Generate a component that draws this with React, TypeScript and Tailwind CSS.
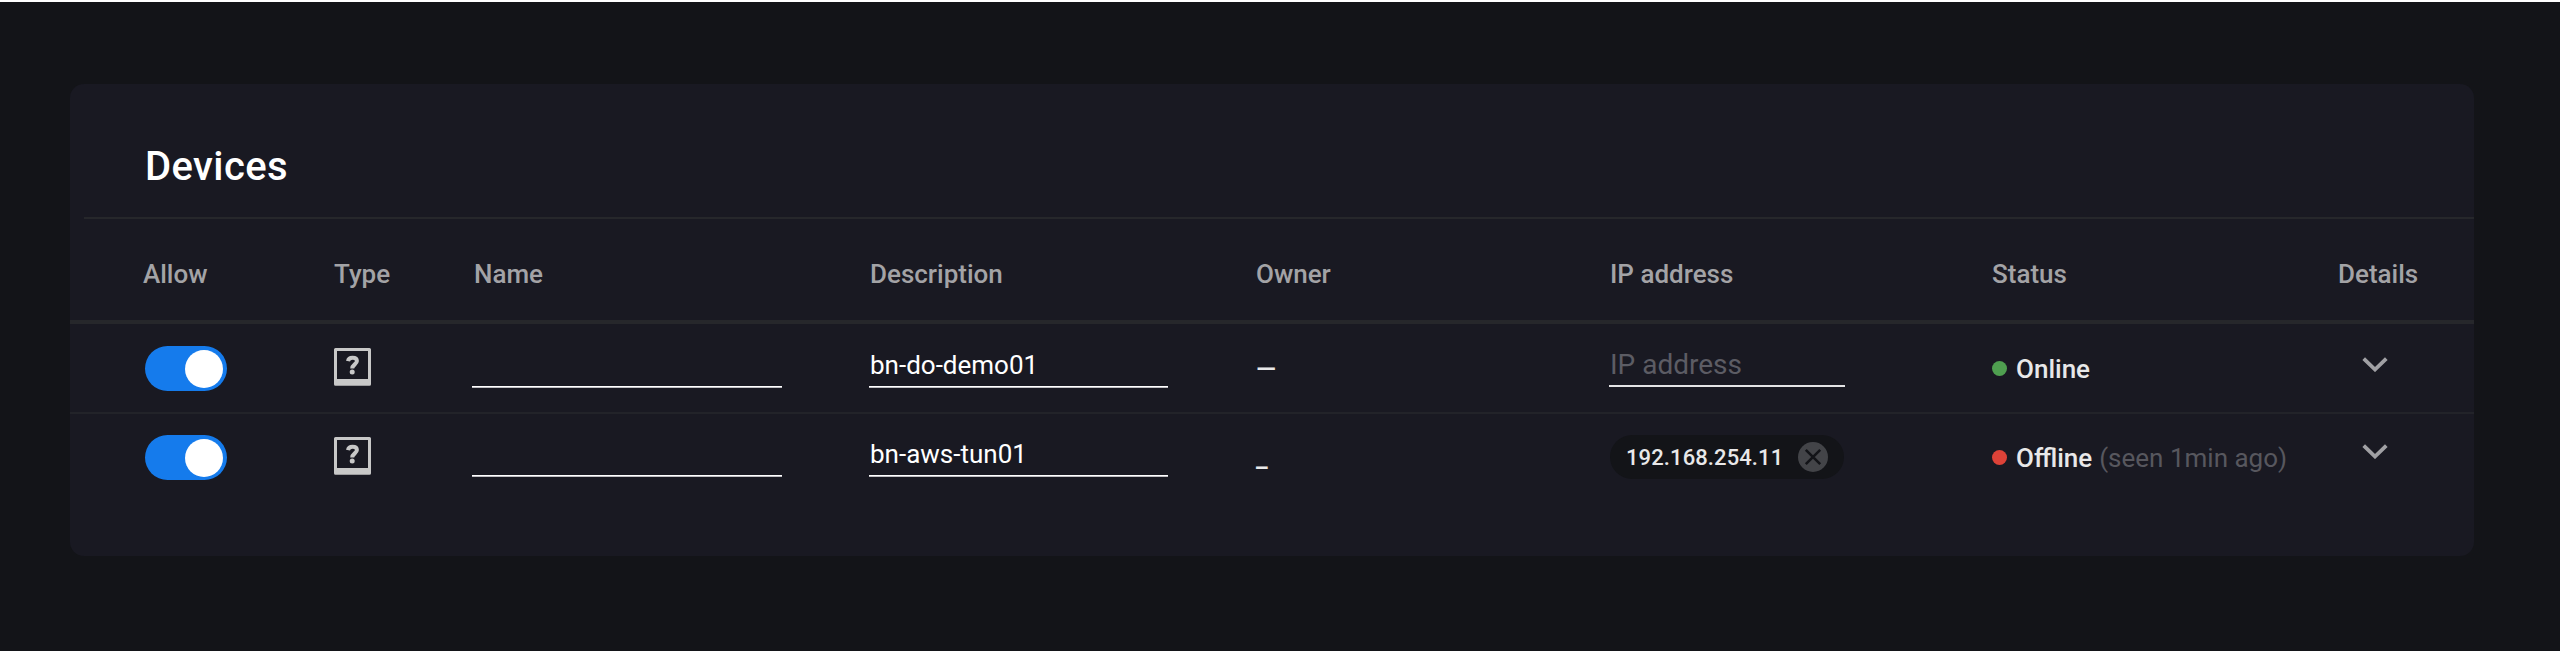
import React from 'react';

type Device = {
  id: number;
  name: string;
  description: string;
  owner: string;
  ip: string;
  online: boolean;
  lastSeen?: string;
};

const devices: Device[] = [
  { id: 1, name: '', description: 'bn-do-demo01', owner: '—', ip: '', online: true },
  { id: 2, name: '', description: 'bn-aws-tun01', owner: '_', ip: '192.168.254.11', online: false, lastSeen: '1min ago' },
];

const columns = [
  { label: 'Allow', className: '-ml-px' },
  { label: 'Type', className: '' },
  { label: 'Name', className: 'pl-0.5' },
  { label: 'Description', className: 'pl-px' },
  { label: 'Owner', className: '' },
  { label: 'IP address', className: 'pl-px' },
  { label: 'Status', className: 'pl-px' },
  { label: 'Details', className: 'pl-px' },
];

const gridClass = 'grid grid-cols-[190px_138px_397px_387px_353px_382px_346px_1fr]';

const inputClass =
  'mt-[14px] block h-12 border-b border-white bg-transparent pt-[5px] pl-px text-[26px] text-white shadow-[0_1px_0_#bfbec3] outline-none';

function Toggle() {
  return (
    <button className="mt-[21px] ml-[0.6px] flex h-[45px] w-[82px] items-center justify-end rounded-full bg-[#157bec] pr-[3.6px]">
      <span className="size-[38px] rounded-full bg-white" />
    </button>
  );
}

function UnknownTypeIcon() {
  return (
    <svg className="mt-[23px] size-[38px]" viewBox="0 0 38 38" fill="none">
      <path
        fill="#c8c8c8"
        fillRule="evenodd"
        d="M1.5 0h34a1.5 1.5 0 0 1 1.5 1.5v34.8a1.5 1.5 0 0 1-1.5 1.5h-34A1.5 1.5 0 0 1 0 36.3V1.5A1.5 1.5 0 0 1 1.5 0zM3 3v28h31V3z"
      />
      <path d="M14 13.100c.4-2.200 1.800-3.300 4.500-3.300s4.400 1.200 4.400 3.300c0 3.100-4.700 3.600-4.700 7.400" stroke="#c8c8c8" strokeWidth="4" />
      <circle cx="18.200" cy="23.900" r="2.500" fill="#c8c8c8" />
    </svg>
  );
}

function IpChip({ ip }: { ip: string }) {
  return (
    <div className="mt-[21px] ml-px flex h-[44px] w-[234px] items-center justify-between rounded-full bg-[#131418] pr-4 pl-4">
      <span className="text-[22px] font-medium tracking-[0.1px] text-[#e8e8e9]">{ip}</span>
      <svg className="size-[30px]" viewBox="0 0 30 30">
        <circle cx="15" cy="15" r="15" fill="#434448" />
        <path d="M7.800 7.800l14.400 14.400M22.200 7.800L7.800 22.200" stroke="#131418" strokeWidth="2.600" />
      </svg>
    </div>
  );
}

function DeviceRow({ device, last }: { device: Device; last: boolean }) {
  return (
    <div className={`${gridClass} pl-[74px] ${last ? 'h-[89px]' : 'h-[90px] border-b-2 border-[#222329] pt-px'}`}>
      <div>
        <Toggle />
      </div>
      <div>
        <UnknownTypeIcon />
      </div>
      <div>
        <input defaultValue={device.name} className={`${inputClass} w-[310px]`} />
      </div>
      <div>
        <input defaultValue={device.description} className={`${inputClass} w-[299px]`} />
      </div>
      <div className="pt-[25px] text-[26px] leading-[39px] font-medium text-[#e8e8e9]">{device.owner}</div>
      <div>
        {device.ip ? (
          <IpChip ip={device.ip} />
        ) : (
          <input
            placeholder="IP address"
            className="mt-[13px] block h-[49px] w-[236px] border-b-2 border-[#e3e3e5] bg-transparent pt-[5px] pl-px text-[28px] text-white outline-none placeholder:text-[#5c5c64]"
          />
        )}
      </div>
      <div className="flex items-start pt-[25px] text-[26px] leading-[39px]">
        <span className={`mt-[11px] ml-px size-[15px] rounded-full ${device.online ? 'bg-[#4f9f50]' : 'bg-[#dd4238]'}`} />
        <span className="ml-[9px] font-medium text-[#e8e8e9]">{device.online ? 'Online' : 'Offline'}</span>
        {device.lastSeen && <span className="ml-[7px] text-[#57575e]">(seen {device.lastSeen})</span>}
      </div>
      <div>
        <svg className={`ml-[24.5px] h-[15px] w-[26px] ${last ? 'mt-[30px]' : 'mt-[31.5px]'}`} viewBox="0 0 26 15" fill="none">
          <path d="M1.700 1.700L13 12.500L24.300 1.700" stroke="#a0a0a4" strokeWidth="3.800" />
        </svg>
      </div>
    </div>
  );
}

export default function App() {
  return (
    <div className="h-[651px] w-[2560px] border-t-2 border-white bg-[#131418] pt-[82px] pl-[70px] font-['Roboto',sans-serif]">
      <div className="h-[472px] w-[2404px] overflow-hidden rounded-[14px] bg-[#191922]">
        <div className="ml-[14px] h-[135px] border-b-2 border-[#26272b] pt-[59px] pl-[61px]">
          <h1 className="text-[40px] leading-[48px] font-medium tracking-[0.4px] text-white">Devices</h1>
        </div>
        <div className={`${gridClass} h-[105px] border-b-4 border-[#26272b] pt-[39px] pl-[74px] text-[26px] leading-8 font-medium text-[#a3a3a6]`}>
          {columns.map((column) => (
            <div key={column.label} className={column.className}>
              {column.label}
            </div>
          ))}
        </div>
        {devices.map((device, i) => (
          <DeviceRow key={device.id} device={device} last={i === devices.length - 1} />
        ))}
      </div>
    </div>
  );
}
